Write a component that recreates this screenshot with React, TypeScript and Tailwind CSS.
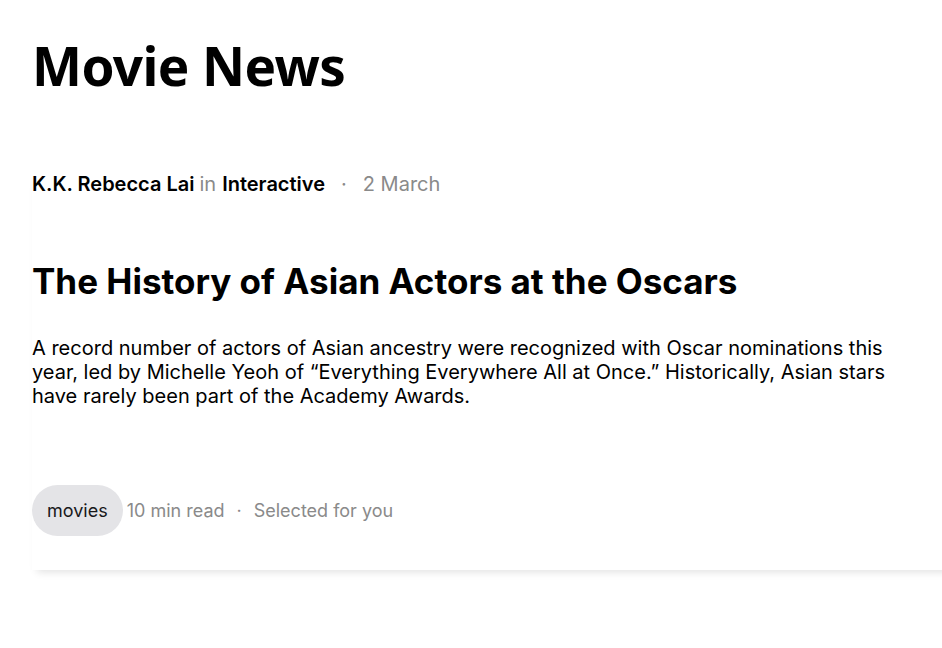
export default function App() {
  return (
    <div className="min-h-screen bg-white overflow-hidden" style={{ fontFamily: "Inter, 'Noto Sans', sans-serif" }}>
      <div className="pl-8">
        <h1 className="pt-[30px] text-[53px] leading-[72px] font-bold tracking-[-0.6px] text-black" style={{ fontFamily: "'Noto Sans', sans-serif" }}>
          Movie News
        </h1>
        <div className="w-[1000px] shadow-[0_7px_8px_-5px_rgba(0,0,0,0.12)] pb-[34px]">
          <div className="mt-[68px] flex items-center text-[20px] leading-7 text-[#8a8a8a]">
            <span className="font-semibold text-black">K.K. Rebecca Lai</span>
            <span className="ml-[5px]">in</span>
            <span className="ml-[6px] font-semibold text-black">Interactive</span>
            <span className="mx-[16px]">·</span>
            <span>2 March</span>
          </div>
          <h2 className="mt-[63px] text-[35px] leading-10 font-bold text-black">The History of Asian Actors at the Oscars</h2>
          <p className="mt-[35px] w-[870px] text-[20px] leading-6 text-black">
            A record number of actors of Asian ancestry were recognized with Oscar nominations this year, led by Michelle Yeoh of “Everything Everywhere All at Once.” Historically, Asian stars have rarely been part of the Academy Awards.
          </p>
          <div className="mt-[77px] flex items-center text-lg text-[#8a8a8a]">
            <span className="h-[51px] px-[15px] flex items-center rounded-full bg-[#e4e4e7] text-[#18181b]">movies</span>
            <span className="ml-[4px]">10 min read</span>
            <span className="mx-[12px]">·</span>
            <span>Selected for you</span>
          </div>
        </div>
      </div>
    </div>
  );
}
